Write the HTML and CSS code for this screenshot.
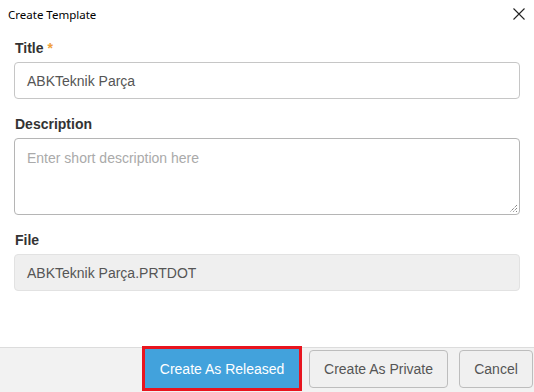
FILE: index.html
```html
<!DOCTYPE html>
<html>
<head>
<meta charset="utf-8">
<link rel="stylesheet" href="styles.css">
</head>
<body>
<div class="dialog">
  <div class="titlebar">
    <span class="title">Create Template</span>
    <svg class="close" width="12" height="12" viewBox="0 0 12 12"><path d="M0.5 0.5 L11.5 11.5 M11.5 0.5 L0.5 11.5" stroke="#222" stroke-width="1.1" fill="none"/></svg>
  </div>
  <div class="content">
    <div class="field">
      <label class="label">Title <span class="req">*</span></label>
      <div class="input">ABKTeknik Parça</div>
    </div>
    <div class="field">
      <label class="label">Description</label>
      <div class="textarea">
        <span class="placeholder">Enter short description here</span>
        <svg class="grip" width="9" height="9" viewBox="0 0 9 9"><path d="M8 1 L1 8 M8 4 L4 8 M8 7 L7 8" stroke="#555" stroke-width="1" stroke-dasharray="1 1" fill="none"/></svg>
      </div>
    </div>
    <div class="field">
      <label class="label">File</label>
      <div class="input readonly">ABKTeknik Parça.PRTDOT</div>
    </div>
  </div>
  <div class="footer">
    <button class="btn primary">Create As Released</button>
    <button class="btn">Create As Private</button>
    <button class="btn cancel">Cancel</button>
  </div>
</div>
</body>
</html>
```
FILE: styles.css
```css
html, body {
  margin: 0;
  padding: 0;
  background: #fff;
}
.dialog {
  width: 534px;
  height: 392px;
  display: flex;
  flex-direction: column;
  font-family: "Liberation Sans", Arial, sans-serif;
}
.titlebar {
  height: 28px;
  display: flex;
  align-items: center;
  justify-content: space-between;
  padding: 0 9px 0 8px;
}
.title {
  font-family: "Noto Sans", "Open Sans", sans-serif;
  font-size: 11.5px;
  color: #000;
}
.close {
  display: block;
}
.content {
  flex: 1;
  padding: 11px 14px 0 14px;
  display: flex;
  flex-direction: column;
  gap: 16px;
}
.field {
  display: flex;
  flex-direction: column;
}
.label {
  font-weight: bold;
  font-size: 14px;
  line-height: 18px;
  color: #333;
  margin: 0 0 5px 1px;
}
.req {
  color: #f0a03a;
}
.input {
  height: 37px;
  box-sizing: border-box;
  border: 1px solid #c6c6c6;
  border-radius: 4px;
  padding: 0 12px;
  display: flex;
  align-items: center;
  font-size: 14px;
  color: #555;
}
.readonly {
  background: #efefef;
  border-color: #e2e2e2;
}
.textarea {
  height: 77px;
  box-sizing: border-box;
  border: 1px solid #b5b5b5;
  border-radius: 4px;
  padding: 11px 12px;
  font-size: 14px;
  color: #aaa;
  position: relative;
}
.grip {
  position: absolute;
  right: 1px;
  bottom: 1px;
}
.footer {
  height: 45px;
  box-sizing: border-box;
  border-top: 1px solid #dcdcdc;
  background: #f2f2f2;
  display: flex;
  align-items: flex-start;
  justify-content: flex-end;
  gap: 10px;
  padding: 2px 1px 0 0;
}
.btn {
  height: 38px;
  box-sizing: border-box;
  border: 1px solid #bdbdbd;
  border-radius: 4px;
  background: #f0f0f0;
  color: #555;
  font-family: "Liberation Sans", Arial, sans-serif;
  font-size: 14px;
  padding: 0 14px;
}
.btn.primary {
  height: 39px;
  width: 154px;
  margin-top: -1px;
  border: none;
  border-radius: 0;
  background: #42a2dc;
  color: #fff;
  padding: 0;
  outline: 3px solid #e8151f;
}
.btn.cancel {
  width: 74px;
  padding: 0;
  margin-left: 1px;
}
```
